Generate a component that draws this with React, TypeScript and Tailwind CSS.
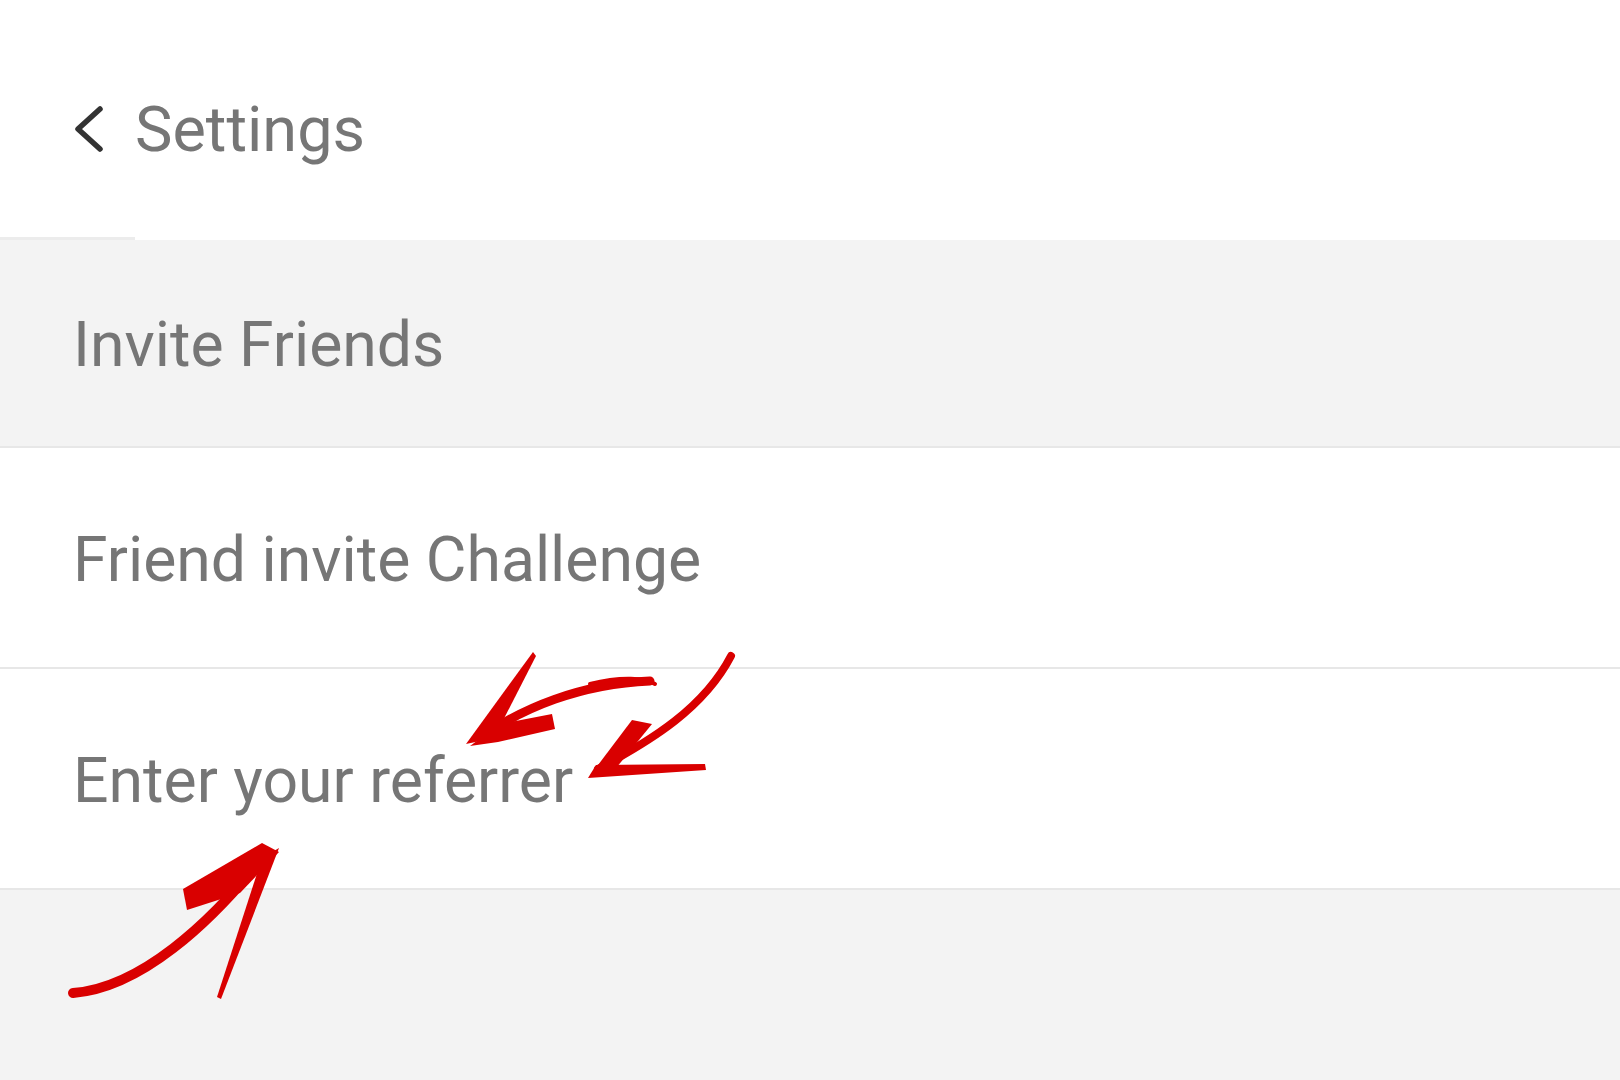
import type { ReactNode } from 'react';

function Row({ children, gray }: { children: ReactNode; gray?: boolean }) {
  return (
    <div
      className={
        'flex items-center pl-[73px] border-b-2 border-[#e7e7e7] ' +
        (gray ? 'bg-[#f3f3f3] h-[208px]' : 'bg-white h-[221px]')
      }
    >
      <span className="text-[62.5px] leading-none text-[#767676] pt-[5px]">{children}</span>
    </div>
  );
}

function Arrows() {
  const red = '#d90000';
  return (
    <svg
      className="absolute inset-0 pointer-events-none"
      width={1620}
      height={1080}
      viewBox="0 0 1620 1080"
      fill="none"
    >
      {/* left arrow */}
      <path d="M480 738 C522 708 580 684 650 681" stroke={red} strokeWidth={9} strokeLinecap="round" />
      <path d="M590 684 C622 676 645 678 655 684" stroke={red} strokeWidth={4} strokeLinecap="round" />
      <polygon points="466,744 533,652 536,656 494,738" fill={red} />
      <polygon points="470,746 500,724 552,714 555,729 498,742" fill={red} />
      {/* down-left arrow */}
      <path d="M598 769 C652 740 704 708 731 656" stroke={red} strokeWidth={8} strokeLinecap="round" />
      <polygon points="589,777 632,720 652,724 612,773" fill={red} />
      <polygon points="588,778 706,770 705,764 596,765" fill={red} />
      {/* up-right arrow */}
      <path d="M73 993 C140 988 210 924 264 856" stroke={red} strokeWidth={10} strokeLinecap="round" />
      <polygon points="183,889 262,843 279,852 240,893 187,910" fill={red} />
      <polygon points="262,858 279,848 221,999 217,997" fill={red} />
    </svg>
  );
}

export default function App() {
  return (
    <div
      className="relative w-full h-[1080px] bg-[#f3f3f3] flex flex-col overflow-hidden"
      style={{ fontFamily: 'Roboto, "Noto Sans", sans-serif' }}
    >
      <div className="relative bg-white h-[240px] flex items-center pt-[18px] pl-[72px]">
        <svg width={34} height={50} viewBox="0 0 34 50" fill="none">
          <polyline
            points="28,5 6,25 28,45"
            stroke="#333333"
            strokeWidth={5.5}
            strokeLinecap="round"
            strokeLinejoin="round"
          />
        </svg>
        <span className="ml-[29px] text-[63px] leading-none text-[#767676]">Settings</span>
        <div className="absolute left-0 bottom-0 w-[135px] h-[3px] bg-[#ececec]" />
      </div>
      <Row gray>Invite Friends</Row>
      <Row>Friend invite Challenge</Row>
      <Row>Enter your referrer</Row>
      <Arrows />
    </div>
  );
}
